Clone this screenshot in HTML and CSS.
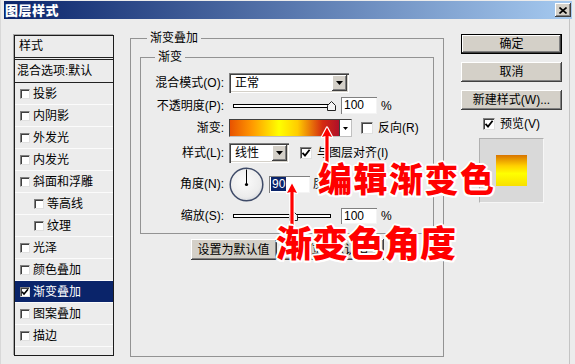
FILE: index.html
```html
<!DOCTYPE html>
<html lang="zh-CN">
<head>
<meta charset="utf-8">
<title>图层样式</title>
<link rel="stylesheet" href="styles.css">
</head>
<body>
<div class="window">
  <div class="titlebar">
    <span class="title">图层样式</span>
    <span class="close"><svg width="8" height="7" viewBox="0 0 8 7"><path d="M0.5 0.5L7.5 6.5M7.5 0.5L0.5 6.5" stroke="#000" stroke-width="1.6" fill="none"/></svg></span>
  </div>
  <div class="body">
    <div class="list">
      <div class="lhead">样式</div>
      <div class="lblend">混合选项:默认</div>
      <div class="li"><span class="cb"></span>投影</div>
      <div class="li"><span class="cb"></span>内阴影</div>
      <div class="li"><span class="cb"></span>外发光</div>
      <div class="li"><span class="cb"></span>内发光</div>
      <div class="li"><span class="cb"></span>斜面和浮雕</div>
      <div class="li sub"><span class="cb"></span>等高线</div>
      <div class="li sub"><span class="cb"></span>纹理</div>
      <div class="li"><span class="cb"></span>光泽</div>
      <div class="li"><span class="cb"></span>颜色叠加</div>
      <div class="li sel"><span class="cb"><svg width="8" height="8" viewBox="0 0 8 8"><path d="M1 3.8L3 6L7 1.2" stroke="#000" stroke-width="1.6" fill="none"/></svg></span>渐变叠加</div>
      <div class="li"><span class="cb"></span>图案叠加</div>
      <div class="li"><span class="cb"></span>描边</div>
    </div>

    <div class="main">
      <div class="group outer">
        <div class="legend">渐变叠加</div>
        <div class="group inner">
          <div class="legend legend-in">渐变</div>
          <div class="form">
            <div class="lbl">混合模式(O):</div>
            <div class="ctl">
              <div class="select w120"><span class="seltext">正常</span><span class="drop"><svg width="7" height="4" viewBox="0 0 7 4"><path d="M0 0H7L3.5 4Z" fill="#000"/></svg></span></div>
            </div>

            <div class="lbl">不透明度(P):</div>
            <div class="ctl">
              <svg class="slider" width="104" height="12" viewBox="0 0 104 12"><rect x="0.5" y="4.5" width="99" height="3" fill="#fff" stroke="#000"/><path d="M94.5 10.5V5.5L98.5 1.5L102.5 5.5V10.5Z" fill="#f4f4f4" stroke="#222"/></svg>
              <div class="inp">100</div>
              <span class="pct">%</span>
            </div>

            <div class="lbl">渐变:</div>
            <div class="ctl">
              <div class="gradbox"><span class="grad"></span><span class="gdrop"><svg width="5" height="3" viewBox="0 0 5 3"><path d="M0 0H5L2.5 3Z" fill="#000"/></svg></span></div>
              <span class="cb big rev"></span><span class="cbl">反向(R)</span>
            </div>

            <div class="lbl">样式(L):</div>
            <div class="ctl">
              <div class="select w60"><span class="seltext">线性</span><span class="drop"><svg width="7" height="4" viewBox="0 0 7 4"><path d="M0 0H7L3.5 4Z" fill="#000"/></svg></span></div>
              <span class="cb big align"><svg width="10" height="10" viewBox="0 0 10 10"><path d="M1.5 4.8L4 7.6L8.6 1.8" stroke="#000" stroke-width="1.8" fill="none"/></svg></span><span class="cbl">与图层对齐(I)</span>
            </div>

            <div class="lbl">角度(N):</div>
            <div class="ctl">
              <svg class="dial" width="35" height="35" viewBox="0 0 35 35">
                <defs><radialGradient id="dg" cx="0.45" cy="0.4" r="0.65"><stop offset="0" stop-color="#fbfbfb"/><stop offset="0.75" stop-color="#ececec"/><stop offset="1" stop-color="#cfd3da"/></radialGradient></defs>
                <circle cx="17.5" cy="17.5" r="16.3" fill="url(#dg)" stroke="#3f4b68" stroke-width="1.5"/>
                <line x1="17.5" y1="17.5" x2="17.5" y2="2.5" stroke="#000" stroke-width="1"/>
                <circle cx="17.5" cy="17.5" r="1.6" fill="#000"/>
              </svg>
              <div class="inp ang"><span class="hl">90</span></div>
              <span class="deg">度</span>
            </div>

            <div class="lbl">缩放(S):</div>
            <div class="ctl">
              <svg class="slider" width="104" height="12" viewBox="0 0 104 12"><rect x="0.5" y="4.5" width="97" height="3" fill="#fff" stroke="#000"/><path d="M56.5 10.5V5.5L60.5 1.5L64.5 5.5V10.5Z" fill="#f4f4f4" stroke="#222"/></svg>
              <div class="inp short">100</div>
              <span class="pct">%</span>
            </div>
          </div>
        </div>
        <div class="btnrow">
          <button class="btn b1">设置为默认值</button>
          <button class="btn b2">复位为默认值</button>
        </div>
      </div>
    </div>

    <div class="side">
      <button class="btn sbtn def">确定</button>
      <button class="btn sbtn">取消</button>
      <button class="btn sbtn">新建样式(W)...</button>
      <div class="prevrow"><span class="cb big"><svg width="10" height="10" viewBox="0 0 10 10"><path d="M1.5 4.8L4 7.6L8.6 1.8" stroke="#000" stroke-width="1.8" fill="none"/></svg></span><span class="cbl">预览(V)</span></div>
      <div class="preview"><span class="pgrad"></span></div>
    </div>
  </div>
</div>

<svg class="arrow a1" width="14" height="40" viewBox="0 0 14 40"><path d="M7 1.5L12 11L8.6 10V39H5.4V10L2 11Z" fill="#f00" stroke="#fff" stroke-width="2.4" stroke-linejoin="round" paint-order="stroke"/></svg>
<svg class="arrow a2" width="14" height="44" viewBox="0 0 14 44"><path d="M7 1.5L12 11L8.6 10V43H5.4V10L2 11Z" fill="#f00" stroke="#fff" stroke-width="2.4" stroke-linejoin="round" paint-order="stroke"/></svg>
<div class="note n1">编辑渐变色</div>
<div class="note n2">渐变色角度</div>
</body>
</html>
```

FILE: styles.css
```css
* { box-sizing: border-box; }
html, body { margin: 0; padding: 0; }
body {
  width: 575px;
  height: 364px;
  position: relative;
  overflow: hidden;
  background: #ececec;
  color: #000;
  font: 12px/14px "Liberation Sans", "Noto Sans CJK SC", sans-serif;
}
.window {
  height: 364px;
  padding: 1px 3px 0 3px;
  border-left: 1px solid #d8d8d8;
}
.titlebar {
  height: 18px;
  display: flex;
  align-items: center;
  justify-content: space-between;
  padding: 0 1px 0 1px;
  background: linear-gradient(to right, #0a246a, #a6caf0);
}
.title {
  color: #fff;
  font-weight: 900;
  font-size: 13px;
  line-height: 18px;
  font-family: "Noto Sans CJK SC", sans-serif;
  letter-spacing: 0.5px;
}
.close {
  width: 16px;
  height: 14px;
  display: flex;
  align-items: center;
  justify-content: center;
  background: #d4d0c8;
  box-shadow: inset -1px -1px #404040, inset 1px 1px #fff, inset -2px -2px #808080;
}
.body {
  display: flex;
  align-items: flex-start;
  padding-left: 10px;
  height: 345px;
  border-right: 1px solid #c4c4c4;
  margin-right: 2px;
}

/* style list */
.list {
  width: 100px;
  height: 321px;
  margin-top: 16px;
  border: 1px solid #1c1c1c;
  box-shadow: -1px -1px 0 #a8a8a8;
}
.lhead {
  height: 24px;
  line-height: 21px;
  padding-left: 4px;
  border-bottom: 3px double #222;
}
.lblend {
  height: 23px;
  line-height: 22px;
  padding-left: 2px;
  border-bottom: 1px solid #222;
}
.li {
  height: 22px;
  display: flex;
  align-items: center;
  gap: 3px;
  padding-left: 5px;
  border-bottom: 1px solid #fbfbfb;
}
.li.sub { padding-left: 19px; }
.li.sel { background: #0a246a; color: #fff; }

.cb {
  width: 10px;
  height: 10px;
  flex: none;
  display: inline-flex;
  align-items: center;
  justify-content: center;
  background: #fff;
  border: 1px solid;
  border-color: #808080 #e0e0e0 #e0e0e0 #808080;
  box-shadow: inset 1px 1px #404040;
}
.cb.big { width: 12px; height: 12px; }
.cbl { margin-left: 5px; white-space: nowrap; }

/* groups */
.main { margin-left: 16px; margin-top: 19px; }
.group { border: 1px solid #939393; }
.outer { width: 314px; height: 319px; }
.legend {
  width: fit-content;
  height: 14px;
  margin: -8px 0 0 16px;
  padding: 0 3px;
  background: #ececec;
  line-height: 14px;
}
.inner { height: 177px; margin: 12px 9px 0 9px; }
.legend-in { margin-left: 14px; }

.form {
  margin-top: 8px;
  display: grid;
  grid-template-columns: 83px auto;
  grid-template-rows: 21px 25px 20px 30px 32px 31px;
  column-gap: 5px;
  align-items: center;
}
.lbl { text-align: right; white-space: nowrap; }
.ctl { display: flex; align-items: center; }

.select {
  height: 20px;
  display: flex;
  align-items: stretch;
  justify-content: space-between;
  background: #fff;
  padding: 2px;
  box-shadow: inset 1px 1px #808080, inset 2px 2px #404040, inset -1px -1px #fff, inset -2px -2px #d4d0c8;
}
.w120 { width: 120px; }
.w60 { width: 60px; }
.seltext { padding-left: 4px; line-height: 16px; }
.drop {
  width: 15px;
  display: flex;
  align-items: center;
  justify-content: center;
  background: #d4d0c8;
  box-shadow: inset -1px -1px #404040, inset 1px 1px #fff, inset -2px -2px #808080;
}

.slider { margin-left: 4px; display: block; }
.inp {
  width: 36px;
  height: 17px;
  margin-left: 4px;
  padding-left: 3px;
  line-height: 17px;
  background: #fff;
  box-shadow: inset 1px 1px #808080, inset -1px -1px #f4f4f4;
}
.inp.short { height: 16px; line-height: 16px; }
.pct { margin-left: 4px; }

.gradbox {
  width: 123px;
  height: 18px;
  display: flex;
  border: 1px solid #404040;
  border-right-color: #c0c0c0;
  border-bottom-color: #c0c0c0;
  background: #fff;
}
.grad {
  flex: 1;
  background: linear-gradient(to right, #e85200, #ff9800 20%, #ffff00 45%, #ffcc00 62%, #d42a10 85%, #b0102a);
  border-right: 1px solid #404040;
}
.gdrop {
  width: 11px;
  display: flex;
  align-items: center;
  justify-content: center;
}
.rev { margin-left: 9px; }
.align { margin-left: 11px; }

.dial { display: block; }
.inp.ang { width: 41px; margin-left: 5px; padding-left: 2px; }
.hl { background: #0a246a; color: #fff; padding: 0 1px; }
.deg { margin-left: 3px; }

.btnrow {
  display: flex;
  justify-content: center;
  gap: 5px;
  margin-top: 5px;
}
.btn {
  height: 21px;
  padding: 0;
  border: none;
  background: #d4d0c8;
  font: 12px/14px "Liberation Sans", "Noto Sans CJK SC", sans-serif;
  color: #000;
  box-shadow: inset -1px -1px #404040, inset 1px 1px #fff, inset -2px -2px #808080;
}
.b1 { width: 86px; }
.b2 { width: 102px; }

/* side column */
.side {
  width: 101px;
  margin-left: 17px;
  margin-top: 15px;
  display: flex;
  flex-direction: column;
}
.sbtn { width: 101px; height: 20px; margin-bottom: 8px; }
.sbtn.def {
  box-shadow: inset 0 0 0 1px #000, inset -2px -2px #404040, inset 2px 2px #fff, inset -3px -3px #808080;
}
.prevrow {
  height: 12px;
  display: flex;
  align-items: center;
  justify-content: center;
  line-height: 12px;
}
.preview {
  width: 65px;
  height: 65px;
  margin: 8px auto 0;
  display: flex;
  align-items: center;
  justify-content: center;
  background: #d9d9d9;
  border: 1px solid;
  border-color: #b0b0b0 #f6f6f6 #f6f6f6 #b0b0b0;
}
.pgrad {
  width: 31px;
  height: 31px;
  background: linear-gradient(to bottom, #d87400, #ffd000 35%, #ffff00 60%, #f8e000);
}

/* annotations overlaid on the screenshot */
.arrow { position: absolute; }
.a1 { left: 320px; top: 126px; }
.a2 { left: 285px; top: 182px; }
.note {
  position: absolute;
  color: #f00;
  font-family: "Noto Sans CJK SC", sans-serif;
  font-weight: 900;
  white-space: nowrap;
  text-shadow: 2px 0 #fff, -2px 0 #fff, 0 2px #fff, 0 -2px #fff,
    1.5px 1.5px #fff, -1.5px 1.5px #fff, 1.5px -1.5px #fff, -1.5px -1.5px #fff;
}
.n1 { left: 318px; top: 161px; font-size: 34px; line-height: 34px; letter-spacing: 1.5px; }
.n2 { left: 276px; top: 223px; font-size: 36px; line-height: 36px; }
```
